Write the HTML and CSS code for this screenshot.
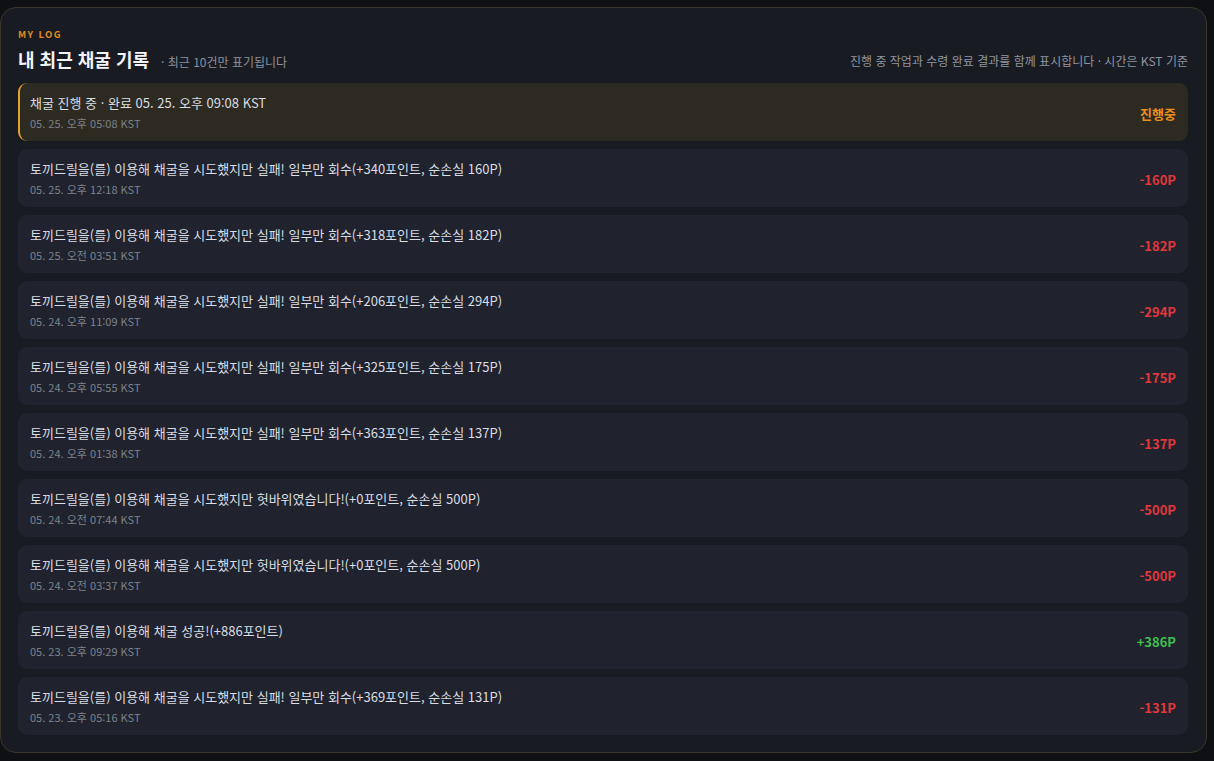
FILE: index.html
```html
<!DOCTYPE html>
<html lang="ko">
<head>
<meta charset="utf-8">
<title>내 최근 채굴 기록</title>
<link rel="stylesheet" href="styles.css">
</head>
<body>
<section class="panel">
  <header class="panel-head">
    <div class="head-left">
      <div class="eyebrow">MY LOG</div>
      <div class="title-row">
        <h2 class="title">내 최근 채굴 기록</h2>
        <span class="sub">· 최근 10건만 표기됩니다</span>
      </div>
    </div>
    <div class="head-note">진행 중 작업과 수령 완료 결과를 함께 표시합니다 · 시간은 KST 기준</div>
  </header>
  <ul class="log-list">
    <li class="log-item pending">
      <div class="log-body">
        <div class="log-text">채굴 진행 중 · 완료 05. 25. 오후 09:08 KST</div>
        <div class="log-time">05. 25. 오후 05:08 KST</div>
      </div>
      <div class="log-amount amt-pending">진행중</div>
    </li>
    <li class="log-item">
      <div class="log-body">
        <div class="log-text">토끼드릴을(를) 이용해 채굴을 시도했지만 실패! 일부만 회수(+340포인트, 순손실 160P)</div>
        <div class="log-time">05. 25. 오후 12:18 KST</div>
      </div>
      <div class="log-amount amt-loss">-160P</div>
    </li>
    <li class="log-item">
      <div class="log-body">
        <div class="log-text">토끼드릴을(를) 이용해 채굴을 시도했지만 실패! 일부만 회수(+318포인트, 순손실 182P)</div>
        <div class="log-time">05. 25. 오전 03:51 KST</div>
      </div>
      <div class="log-amount amt-loss">-182P</div>
    </li>
    <li class="log-item">
      <div class="log-body">
        <div class="log-text">토끼드릴을(를) 이용해 채굴을 시도했지만 실패! 일부만 회수(+206포인트, 순손실 294P)</div>
        <div class="log-time">05. 24. 오후 11:09 KST</div>
      </div>
      <div class="log-amount amt-loss">-294P</div>
    </li>
    <li class="log-item">
      <div class="log-body">
        <div class="log-text">토끼드릴을(를) 이용해 채굴을 시도했지만 실패! 일부만 회수(+325포인트, 순손실 175P)</div>
        <div class="log-time">05. 24. 오후 05:55 KST</div>
      </div>
      <div class="log-amount amt-loss">-175P</div>
    </li>
    <li class="log-item">
      <div class="log-body">
        <div class="log-text">토끼드릴을(를) 이용해 채굴을 시도했지만 실패! 일부만 회수(+363포인트, 순손실 137P)</div>
        <div class="log-time">05. 24. 오후 01:38 KST</div>
      </div>
      <div class="log-amount amt-loss">-137P</div>
    </li>
    <li class="log-item">
      <div class="log-body">
        <div class="log-text">토끼드릴을(를) 이용해 채굴을 시도했지만 헛바위였습니다!(+0포인트, 순손실 500P)</div>
        <div class="log-time">05. 24. 오전 07:44 KST</div>
      </div>
      <div class="log-amount amt-loss">-500P</div>
    </li>
    <li class="log-item">
      <div class="log-body">
        <div class="log-text">토끼드릴을(를) 이용해 채굴을 시도했지만 헛바위였습니다!(+0포인트, 순손실 500P)</div>
        <div class="log-time">05. 24. 오전 03:37 KST</div>
      </div>
      <div class="log-amount amt-loss">-500P</div>
    </li>
    <li class="log-item">
      <div class="log-body">
        <div class="log-text">토끼드릴을(를) 이용해 채굴 성공!(+886포인트)</div>
        <div class="log-time">05. 23. 오후 09:29 KST</div>
      </div>
      <div class="log-amount amt-gain">+386P</div>
    </li>
    <li class="log-item">
      <div class="log-body">
        <div class="log-text">토끼드릴을(를) 이용해 채굴을 시도했지만 실패! 일부만 회수(+369포인트, 순손실 131P)</div>
        <div class="log-time">05. 23. 오후 05:16 KST</div>
      </div>
      <div class="log-amount amt-loss">-131P</div>
    </li>
  </ul>
</section>
</body>
</html>
```

FILE: styles.css
```css
* {
  box-sizing: border-box;
}

html, body {
  margin: 0;
  background: #0e1014;
}

body {
  padding: 7px 7px 8px 0;
  font-family: "Noto Sans CJK KR", "Noto Sans", sans-serif;
  color: #e3e7ee;
}

.panel {
  background: #191b23;
  border: 1px solid #3a3529;
  border-radius: 16px;
  padding: 20px 18px 12px 17px;
  height: 746px;
}

.panel-head {
  display: flex;
  justify-content: space-between;
  align-items: flex-end;
  margin-bottom: 11px;
}

.eyebrow {
  font-size: 9.5px;
  font-weight: 700;
  letter-spacing: 1.4px;
  color: #e08a1e;
  line-height: 12px;
  margin-bottom: 6px;
}

.title-row {
  display: flex;
  align-items: baseline;
  gap: 12px;
}

.title {
  margin: 0;
  font-size: 18px;
  font-weight: 700;
  line-height: 26px;
  color: #f2f4f8;
}

.sub {
  font-size: 12px;
  color: #8b919c;
}

.head-note {
  font-size: 12px;
  color: #8f95a0;
  line-height: 18px;
  margin-bottom: 2px;
}

.log-list {
  list-style: none;
  margin: 0;
  padding: 0;
  display: flex;
  flex-direction: column;
  gap: 8px;
}

.log-item {
  display: flex;
  align-items: center;
  justify-content: space-between;
  height: 58px;
  padding: 0 12px;
  background: #20232d;
  border-radius: 9px;
}

.log-item.pending {
  background: #2d2a21;
  border-left: 2px solid #e0a228;
  padding-left: 10px;
}

.log-text {
  font-size: 13px;
  line-height: 18px;
  color: #d9dde5;
}

.log-time {
  font-size: 11px;
  line-height: 15px;
  margin-top: 4px;
  color: #7c828d;
}

.log-amount {
  font-size: 13px;
  font-weight: 700;
  margin-top: 2px;
}

.amt-loss {
  color: #e0383c;
}

.amt-gain {
  color: #3fbf4f;
}

.amt-pending {
  color: #ec8e1c;
}
```
